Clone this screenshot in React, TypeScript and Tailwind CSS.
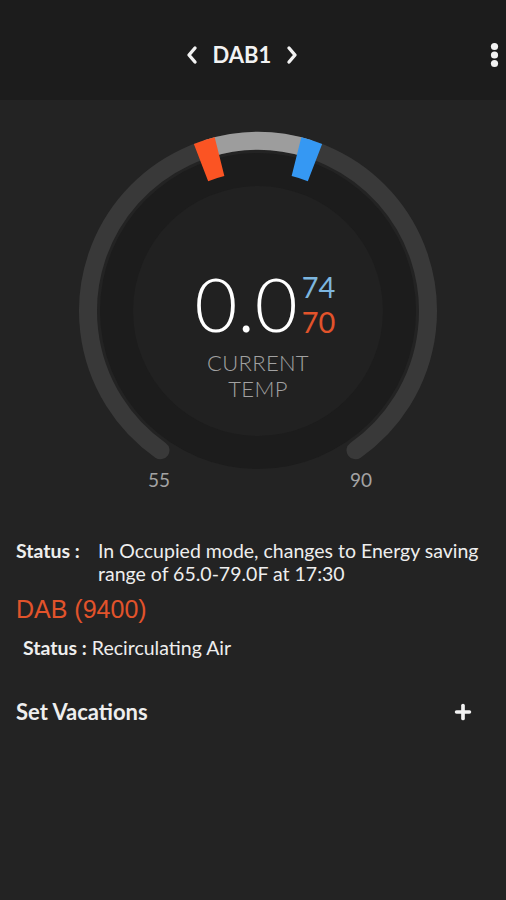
import { Plus } from "lucide-react";

const CX = 180;
const CY = 180;

// point on a circle, angle in degrees measured clockwise from the top
function pt(r: number, deg: number) {
  const a = (deg * Math.PI) / 180;
  return `${(CX + r * Math.sin(a)).toFixed(2)} ${(CY - r * Math.cos(a)).toFixed(2)}`;
}

function arc(r: number, from: number, to: number) {
  const sweep = ((to - from) % 360 + 360) % 360;
  const large = sweep > 180 ? 1 : 0;
  return `M ${pt(r, from)} A ${r} ${r} 0 ${large} 1 ${pt(r, to)}`;
}

function Dial() {
  return (
    <svg width="360" height="360" viewBox="0 0 360 360" className="absolute inset-0">
      <circle cx={CX} cy={CY} r="158" fill="#1c1c1c" />
      <circle cx={CX} cy={CY} r="125" fill="#212121" />
      <path d={arc(170, 215, 145)} stroke="#393939" strokeWidth="18" fill="none" strokeLinecap="round" />
      <path d={arc(170, -17.5, 17.5)} stroke="#9d9d9d" strokeWidth="18" fill="none" />
      <path d={arc(159, -21, -14)} stroke="#fb5423" strokeWidth="40" fill="none" />
      <path d={arc(159, 14, 21)} stroke="#3598f3" strokeWidth="40" fill="none" />
    </svg>
  );
}

function Header() {
  return (
    <div className="h-[100px] bg-[#1c1c1c] flex items-start pt-[43px]">
      <div className="flex-1 flex items-center justify-center gap-[14px]">
        <svg width="14" height="20" viewBox="0 0 14 20">
          <path d="M10 3 L4 10 L10 17" stroke="#f2f2f2" strokeWidth="3.4" fill="none" strokeLinecap="round" strokeLinejoin="round" />
        </svg>
        <span className="text-[22px] leading-[24px] font-bold text-[#f2f2f2]">DAB1</span>
        <svg width="14" height="20" viewBox="0 0 14 20">
          <path d="M4 3 L10 10 L4 17" stroke="#f2f2f2" strokeWidth="3.4" fill="none" strokeLinecap="round" strokeLinejoin="round" />
        </svg>
      </div>
      <svg width="22" height="30" viewBox="0 0 22 30" className="mt-[-2px]">
        <circle cx="10.5" cy="5.5" r="3.6" fill="#f2f2f2" />
        <circle cx="10.5" cy="14" r="3.6" fill="#f2f2f2" />
        <circle cx="10.5" cy="22.5" r="3.6" fill="#f2f2f2" />
      </svg>
    </div>
  );
}

function Gauge() {
  return (
    <div className="relative w-[360px] h-[360px] ml-[78px] mt-[31px]">
      <Dial />
      <div className="absolute inset-0 flex flex-col items-center pt-[136px]">
        <div className="flex items-start ml-[14px]">
          <span className="text-[74px] leading-[74px] font-light text-white">0.0</span>
          <div className="flex flex-col mt-[2px] ml-[4px] text-[29px] leading-[35px] font-normal">
            <span className="text-[#7db6df]">74</span>
            <span className="text-[#e2532b]">70</span>
          </div>
        </div>
        <div className="mt-[9px] flex flex-col items-center text-[22px] leading-[26px] font-light text-[#a2a2a2] tracking-[0.3px]">
          <span>CURRENT</span>
          <span>TEMP</span>
        </div>
      </div>
      <span className="absolute left-[61px] top-[339px] w-[40px] text-center text-[19px] leading-[19px] text-[#a3a3a3]">55</span>
      <span className="absolute left-[263px] top-[339px] w-[40px] text-center text-[19px] leading-[19px] text-[#a3a3a3]">90</span>
    </div>
  );
}

export default function App() {
  return (
    <div className="w-[506px] h-[900px] bg-[#232323] font-['Lato','Open_Sans',sans-serif] text-[#eeeeee] overflow-hidden">
      <Header />
      <Gauge />

      <div className="mt-[48px] pl-4 pr-4 flex text-[19.5px] leading-[23px]">
        <span className="w-[82px] shrink-0 font-bold">Status :</span>
        <span>In Occupied mode, changes to Energy saving range of 65.0-79.0F at 17:30</span>
      </div>

      <div className="mt-[9px] pl-4 font-['Liberation_Sans','Arial',sans-serif] text-[25px] leading-[30px] text-[#e2532b]">
        DAB (9400)
      </div>

      <div className="mt-[12px] pl-[23px] text-[19.5px] leading-[23px]">
        <span className="font-bold">Status :</span> Recirculating Air
      </div>

      <div className="mt-[40px] pl-4 pr-[32px] flex items-center justify-between">
        <span className="text-[22px] leading-[25px] font-bold">Set Vacations</span>
        <Plus size={22} strokeWidth={4} className="text-[#f2f2f2]" />
      </div>
    </div>
  );
}
